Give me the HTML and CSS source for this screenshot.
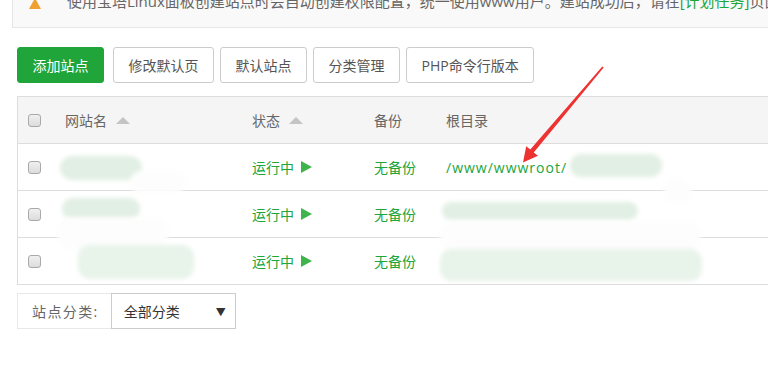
FILE: index.html
```html
<!DOCTYPE html>
<html lang="zh-CN">
<head>
    <meta charset="UTF-8">
    <meta name="viewport" content="width=device-width, initial-scale=1.0">
    <title>网站管理</title>
    <link rel="stylesheet" href="styles.css">
</head>
<body>
    <div class="notice">
        <span class="warn-icon"></span>
        使用宝塔Linux面板创建站点时会自动创建权限配置，统一使用www用户。建站成功后，请在<a class="link">[计划任务]</a>页面添加网站日志切割任务
    </div>

    <div class="content">
        <div class="toolbar">
            <button class="btn btn-green">添加站点</button>
            <button class="btn">修改默认页</button>
            <button class="btn">默认站点</button>
            <button class="btn">分类管理</button>
            <button class="btn">PHP命令行版本</button>
        </div>

        <div class="site-table">
            <div class="row head">
                <div class="cell"><span class="check"></span></div>
                <div class="cell">网站名 <span class="sort"></span></div>
                <div class="cell">状态 <span class="sort"></span></div>
                <div class="cell">备份</div>
                <div class="cell">根目录</div>
            </div>
            <div class="row">
                <div class="cell"><span class="check"></span></div>
                <div class="cell"></div>
                <div class="cell green">运行中 <span class="play"></span></div>
                <div class="cell green">无备份</div>
                <div class="cell green path">/www/wwwroot/</div>
            </div>
            <div class="row">
                <div class="cell"><span class="check"></span></div>
                <div class="cell"></div>
                <div class="cell green">运行中 <span class="play"></span></div>
                <div class="cell green">无备份</div>
                <div class="cell green"></div>
            </div>
            <div class="row">
                <div class="cell"><span class="check"></span></div>
                <div class="cell"></div>
                <div class="cell green">运行中 <span class="play"></span></div>
                <div class="cell green">无备份</div>
                <div class="cell green"></div>
            </div>
        </div>

        <div class="filter">
            <span class="filter-label">站点分类:</span>
            <span class="filter-select">全部分类 <span class="caret">▼</span></span>
        </div>
    </div>

    <!-- 打码区域 -->
    <div class="blur" style="left:60px;top:156px;width:82px;height:24px;"></div>
    <div class="blur white" style="left:130px;top:171px;width:56px;height:22px;"></div>
    <div class="blur" style="left:62px;top:198px;width:78px;height:22px;"></div>
    <div class="blur white" style="left:58px;top:217px;width:110px;height:32px;"></div>
    <div class="blur light" style="left:78px;top:245px;width:116px;height:34px;"></div>
    <div class="blur" style="left:570px;top:154px;width:92px;height:23px;"></div>
    <div class="blur white" style="left:664px;top:179px;width:28px;height:24px;"></div>
    <div class="blur" style="left:442px;top:202px;width:196px;height:18px;"></div>
    <div class="blur white" style="left:440px;top:221px;width:260px;height:30px;"></div>
    <div class="blur light" style="left:440px;top:249px;width:262px;height:32px;"></div>

    <svg class="arrow" width="768" height="368" viewBox="0 0 768 368">
        <polygon points="602.3,66.4 530.3,149.6 526.2,146.2 523,162.5 538,155.8 533.7,152.6 603.7,67.6" fill="#ee3131"/>
    </svg>
</body>
</html>
```

FILE: styles.css
```css
body {
    margin: 0;
    padding-left: 12px;
    font-family: "Open Sans", "Noto Sans CJK SC", sans-serif;
    font-size: 14px;
    color: #666;
    background: #fff;
    overflow: hidden;
}

.notice {
    margin-top: -20px;
    padding: 10px 0 16px 16px;
    line-height: 20px;
    font-size: 15px;
    color: #666;
    background: #f9f9f9;
    border: 1px solid #e6e6e6;
    border-right: none;
    white-space: nowrap;
    overflow: hidden;
}

.warn-icon {
    display: inline-block;
    width: 0;
    height: 0;
    border-left: 6px solid transparent;
    border-right: 6px solid transparent;
    border-bottom: 11px solid #f0a030;
    margin-right: 22px;
    vertical-align: -2px;
}

.link {
    color: #20a53a;
}

.content {
    padding-left: 5px;
}

.toolbar {
    display: flex;
    gap: 6px;
    margin-top: 19px;
}

.btn {
    height: 36px;
    padding: 0 14.5px;
    font-family: inherit;
    font-size: 14px;
    color: #555;
    background: #fff;
    border: 1px solid #ccc;
    border-radius: 3px;
}

.btn-green {
    color: #fff;
    background: #20a53a;
    border-color: #20a53a;
    margin-right: 3px;
}

.site-table {
    margin-top: 13px;
    width: 790px;
    border-left: 1px solid #ddd;
    border-top: 1px solid #ddd;
}

.row {
    display: grid;
    grid-template-columns: 37px 187px 122px 72px 1fr;
    height: 46px;
    border-bottom: 1px solid #ddd;
    align-items: center;
}

.row.head {
    background: #f5f5f5;
    color: #666;
}

.cell {
    padding: 0 10px;
    display: flex;
    align-items: center;
    white-space: nowrap;
}

.green {
    color: #20a53a;
}

.path {
    letter-spacing: 1px;
}

.check {
    width: 11px;
    height: 11px;
    border: 1px solid #a9a9a9;
    border-radius: 3px;
    background: linear-gradient(#f0f0f0, #dcdcdc);
}

.sort {
    display: inline-block;
    width: 0;
    height: 0;
    border-left: 7px solid transparent;
    border-right: 7px solid transparent;
    border-bottom: 7px solid #c4c4c4;
    margin-left: 9px;
}

.play {
    display: inline-block;
    width: 0;
    height: 0;
    border-top: 6px solid transparent;
    border-bottom: 6px solid transparent;
    border-left: 11px solid #3fb44d;
    margin-left: 7px;
}

.filter {
    display: flex;
    margin-top: 8px;
    height: 36px;
}

.filter-label {
    display: flex;
    align-items: center;
    padding: 0 12px 0 14px;
    letter-spacing: 1.4px;
    border: 1px solid #e8e8e8;
    border-right: none;
    color: #666;
}

.filter-select {
    display: flex;
    align-items: center;
    width: 111px;
    padding: 0 0 0 12px;
    border: 1px solid #ccc;
    color: #333;
    position: relative;
}

.caret {
    position: absolute;
    right: 9px;
    font-size: 10px;
    color: #333;
}

.blur {
    position: absolute;
    background: #e2efe4;
    border-radius: 12px;
    filter: blur(2px);
}

.blur.light {
    background: #e8f3ea;
}

.blur.white {
    background: #fcfdfc;
}

.arrow {
    position: absolute;
    left: 0;
    top: 0;
    pointer-events: none;
}
```
